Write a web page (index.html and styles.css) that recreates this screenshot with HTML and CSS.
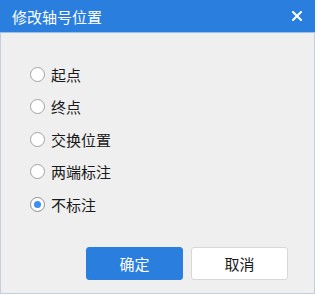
FILE: index.html
```html
<!DOCTYPE html>
<html lang="zh">
<head>
<meta charset="utf-8">
<link rel="stylesheet" href="styles.css">
</head>
<body>
<div class="dialog">
  <div class="titlebar">
    <span class="title">修改轴号位置</span>
    <svg class="close" width="10" height="10" viewBox="0 0 10 10"><path d="M1 1L9 9M9 1L1 9" stroke="#fff" stroke-width="2" stroke-linecap="square"/></svg>
  </div>
  <div class="body">
    <div class="options">
      <label class="opt"><span class="radio"></span><span>起点</span></label>
      <label class="opt"><span class="radio"></span><span>终点</span></label>
      <label class="opt"><span class="radio"></span><span>交换位置</span></label>
      <label class="opt"><span class="radio"></span><span>两端标注</span></label>
      <label class="opt"><span class="radio checked"></span><span>不标注</span></label>
    </div>
    <div class="buttons">
      <button class="btn primary">确定</button>
      <button class="btn">取消</button>
    </div>
  </div>
</div>
</body>
</html>
```
FILE: styles.css
```css
html, body { margin: 0; padding: 0; background: #ffffff; }
body { font-family: "Noto Sans CJK SC", "Noto Sans", sans-serif; }
.dialog {
  width: 315px;
  height: 294px;
  box-sizing: border-box;
  border: 1px solid #c3cfe0;
  border-top: none;
  background: #efefef;
  display: flex;
  flex-direction: column;
}
.titlebar {
  height: 33px;
  background: #2a7fde;
  border-bottom: 1px solid #9cc0ea;
  margin: 0 -1px;
  display: flex;
  align-items: center;
  justify-content: space-between;
  padding: 0 12px 0 12px;
  box-sizing: border-box;
}
.title { color: #fff; font-size: 15px; line-height: 1; }
.close { margin-right: 1px; }
.body { flex: 1; display: flex; flex-direction: column; }
.options {
  display: flex;
  flex-direction: column;
  padding: 25px 0 0 29px;
}
.opt {
  display: flex;
  align-items: center;
  height: 32.5px;
  font-size: 15px;
  color: #1a1a1a;
}
.radio {
  width: 13px;
  height: 13px;
  border: 1.5px solid #a2a2a2;
  border-radius: 50%;
  background: #fff;
  margin-right: 6px;
  position: relative;
  flex: none;
}
.radio.checked { border-color: #8e8e8e; }
.radio.checked::after {
  content: "";
  position: absolute;
  left: 3px; top: 3px;
  width: 7px; height: 7px;
  border-radius: 50%;
  background: #3d8ff0;
}
.buttons {
  display: flex;
  gap: 8px;
  padding: 26px 0 0 85px;
}
.btn {
  width: 97px;
  height: 33px;
  border-radius: 3px;
  border: 1px solid #d8d8d8;
  background: #fff;
  font-family: inherit;
  font-size: 15px;
  color: #1a1a1a;
  padding: 0;
}
.btn.primary { background: #2a7fde; border-color: #2a7fde; color: #fff; }
```
